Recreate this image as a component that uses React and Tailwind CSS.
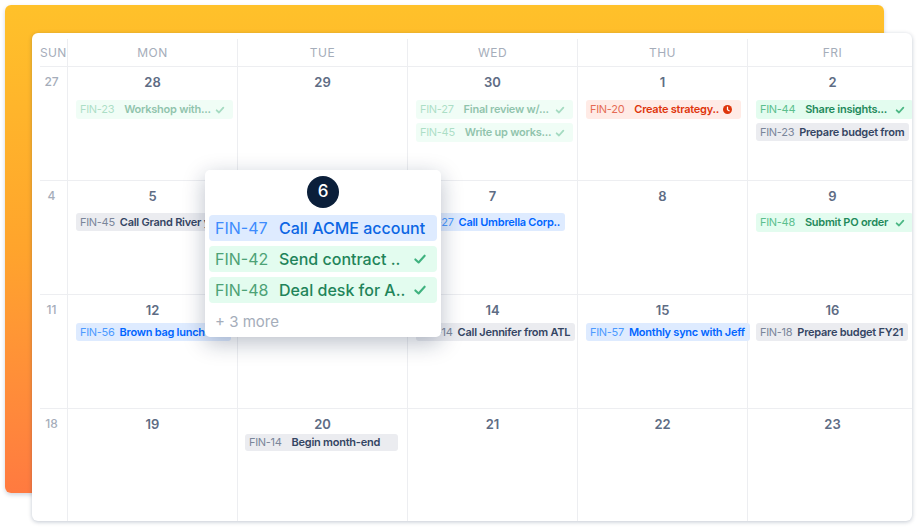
import React from "react";

const STY = {
  green: { bg: "bg-[#E3FCEF]", id: "text-[#5BBF8E]", t: "text-[#1F8A5B]" },
  red: { bg: "bg-[#FFEBE6]", id: "text-[#E56B55]", t: "text-[#DE350B]" },
  gray: { bg: "bg-[#EBECF0]", id: "text-[#7A869A]", t: "text-[#344563]" },
  blue: { bg: "bg-[#DEEBFF]", id: "text-[#4C9AFF]", t: "text-[#0065FF]" },
};

function CheckIcon({ size = 10, color = "#4DB885", sw = 2.2 }) {
  return (
    <svg width={size} height={size} viewBox="0 0 12 12" fill="none">
      <path d="M2 6.4 L4.8 9 L10 3.2" stroke={color} strokeWidth={sw} strokeLinecap="round" strokeLinejoin="round" />
    </svg>
  );
}

function ClockIcon() {
  return (
    <svg width="9" height="9" viewBox="0 0 10 10">
      <circle cx="5" cy="5" r="5" fill="#DE350B" />
      <path d="M5 2.4 V5.2 L6.8 6.4" stroke="#fff" strokeWidth="1.4" fill="none" strokeLinecap="round" />
    </svg>
  );
}

function Pill({ p }) {
  const s = STY[p.c];
  return (
    <div
      className={`flex items-center ${p.h || "h-[18px]"} rounded-[3px] pl-[4px] pr-[5px] text-[11px] leading-none whitespace-nowrap overflow-hidden ${s.bg} ${p.w || "w-fit"} ${p.ml || "ml-[8px]"} ${p.fade ? "opacity-50" : ""}`}
    >
      <span className={`${s.id} tracking-[-0.3px]`}>{p.id}</span>
      <span className={`${p.gap || "ml-[5px]"} font-semibold tracking-[-0.25px] ${s.t}`}>{p.t}</span>
      {p.icon === "check" && (
        <span className="ml-auto mr-[3px] flex items-center">
          <CheckIcon />
        </span>
      )}
      {p.icon === "clock" && (
        <span className="ml-auto mr-[4px] flex items-center">
          <ClockIcon />
        </span>
      )}
    </div>
  );
}

const G = (id, t, extra = {}) => ({ c: "green", id, t, icon: "check", w: "w-[157px]", gap: "ml-[10px]", h: "h-[19px]", ...extra });

const rows = [
  {
    mt: "mt-[10px]",
    sun: "27",
    days: [
      { d: "28", ev: [G("FIN-23", "Workshop with...", { fade: true })] },
      { d: "29", ev: [] },
      { d: "30", ev: [G("FIN-27", "Final review w/...", { fade: true }), G("FIN-45", "Write up works...", { fade: true })] },
      { d: "1", ev: [{ c: "red", id: "FIN-20", t: "Create strategy..", icon: "clock", w: "w-[155px]", gap: "ml-[10px]", h: "h-[19px]" }] },
      {
        d: "2",
        ev: [G("FIN-44", "Share insights..."), { c: "gray", id: "FIN-23", t: "Prepare budget from" }],
      },
    ],
  },
  {
    mt: "mt-[9px]",
    sun: "4",
    days: [
      { d: "5", ev: [{ c: "gray", id: "FIN-45", t: "Call Grand River y", w: "w-[157px]" }] },
      { d: "", ev: [] },
      { d: "7", ev: [{ c: "blue", id: "FIN-27", t: "Call Umbrella Corp.." }] },
      { d: "8", ev: [] },
      { d: "9", ev: [G("FIN-48", "Submit PO order")] },
    ],
  },
  {
    mt: "mt-[5px]",
    sun: "11",
    days: [
      { d: "12", ev: [{ c: "blue", id: "FIN-56", t: "Brown bag lunch", w: "w-[155px]" }] },
      { d: "", ev: [] },
      { d: "14", ev: [{ c: "gray", id: "FIN-14", t: "Call Jennifer from ATL" }] },
      { d: "15", ev: [{ c: "blue", id: "FIN-57", t: "Monthly sync with Jeff" }] },
      { d: "16", ev: [{ c: "gray", id: "FIN-18", t: "Prepare budget FY21" }] },
    ],
  },
  {
    mt: "mt-[2px]",
    sun: "18",
    days: [
      { d: "19", ev: [] },
      { d: "20", ev: [{ c: "gray", id: "FIN-14", t: "Begin month-end", w: "w-[153px]", ml: "ml-[7px]", gap: "ml-[10px]", h: "h-[17px]" }] },
      { d: "21", ev: [] },
      { d: "22", ev: [] },
      { d: "23", ev: [] },
    ],
  },
];

const heads = ["MON", "TUE", "WED", "THU", "FRI"];

function PopPill({ c, id, t, check }) {
  const blue = c === "blue";
  return (
    <div
      className={`flex items-center h-[26px] rounded-[4px] pl-[6px] pr-[10px] text-[16px] leading-none whitespace-nowrap ${blue ? "bg-[#DEEBFF]" : "bg-[#E3FCEF]"}`}
    >
      <span className={`w-[58px] ${blue ? "text-[#3D8BFD]" : "text-[#4DA276]"}`}>{id}</span>
      <span className={`ml-[6px] font-medium ${blue ? "text-[#0C66E4]" : "text-[#1F845A]"}`}>{t}</span>
      {check && (
        <span className="ml-auto flex items-center">
          <CheckIcon size={14} color="#3FB27F" sw={1.8} />
        </span>
      )}
    </div>
  );
}

export default function App() {
  return (
    <div className="relative w-[920px] h-[530px] bg-white overflow-hidden pt-[33px] pl-[32px] font-[Inter,sans-serif]">
      <div className="absolute left-[5px] top-[5px] w-[879px] h-[488px] rounded-[6px] bg-gradient-to-b from-[#FFC12A] via-[#FFA42C] to-[#FF7A40] shadow-[0_2px_4px_rgba(9,30,66,0.18)]" />
      <div className="relative w-[880px] h-[488px] rounded-[6px] bg-white overflow-hidden shadow-[0_1px_4px_rgba(9,30,66,0.25)]">
        <div className="pt-[6px] pl-[8px]">
          <div className="grid grid-cols-[28px_repeat(5,170px)]">
            <div className="h-[28px] flex items-center justify-start text-[12px] text-[#A5ADBA] tracking-[0.3px] border-r border-b border-[#EDEEF1]">
              SUN
            </div>
            {heads.map((h) => (
              <div
                key={h}
                className="h-[28px] flex items-center justify-center text-[12px] text-[#A5ADBA] tracking-[0.5px] border-r border-b border-[#EDEEF1]"
              >
                {h}
              </div>
            ))}
            {rows.map((r, ri) => (
              <React.Fragment key={ri}>
                <div className="h-[114px] border-r border-b border-[#EDEEF1] pt-[7px] pr-[4px] text-center text-[12px] leading-4 font-medium text-[#A5ADBA]">
                  {r.sun}
                </div>
                {r.days.map((c, ci) => (
                  <div key={ci} className="h-[114px] border-r border-b border-[#EDEEF1] pt-[7px]">
                    <div className="h-4 text-center text-[13px] leading-4 font-semibold text-[#5E6C84]">{c.d}</div>
                    <div className={`flex flex-col gap-[4px] ${r.mt}`}>
                      {c.ev.map((p, pi) => (
                        <Pill key={pi} p={p} />
                      ))}
                    </div>
                  </div>
                ))}
              </React.Fragment>
            ))}
          </div>
        </div>

        <div className="absolute left-[173px] top-[137px] w-[236px] h-[167px] rounded-[5px] bg-white shadow-[0_6px_22px_rgba(9,30,66,0.28)] px-[4px] pt-[6px]">
          <div className="mx-auto w-[32px] h-[32px] rounded-full bg-[#0B1F3A] flex items-center justify-center text-white text-[17px] font-medium">
            6
          </div>
          <div className="mt-[7px] flex flex-col gap-[5px]">
            <PopPill c="blue" id="FIN-47" t="Call ACME account" />
            <PopPill c="green" id="FIN-42" t="Send contract .." check />
            <PopPill c="green" id="FIN-48" t="Deal desk for A.." check />
          </div>
          <div className="mt-[9px] ml-[6px] text-[15px] leading-5 text-[#A5ADBA]">+ 3 more</div>
        </div>
      </div>
    </div>
  );
}
